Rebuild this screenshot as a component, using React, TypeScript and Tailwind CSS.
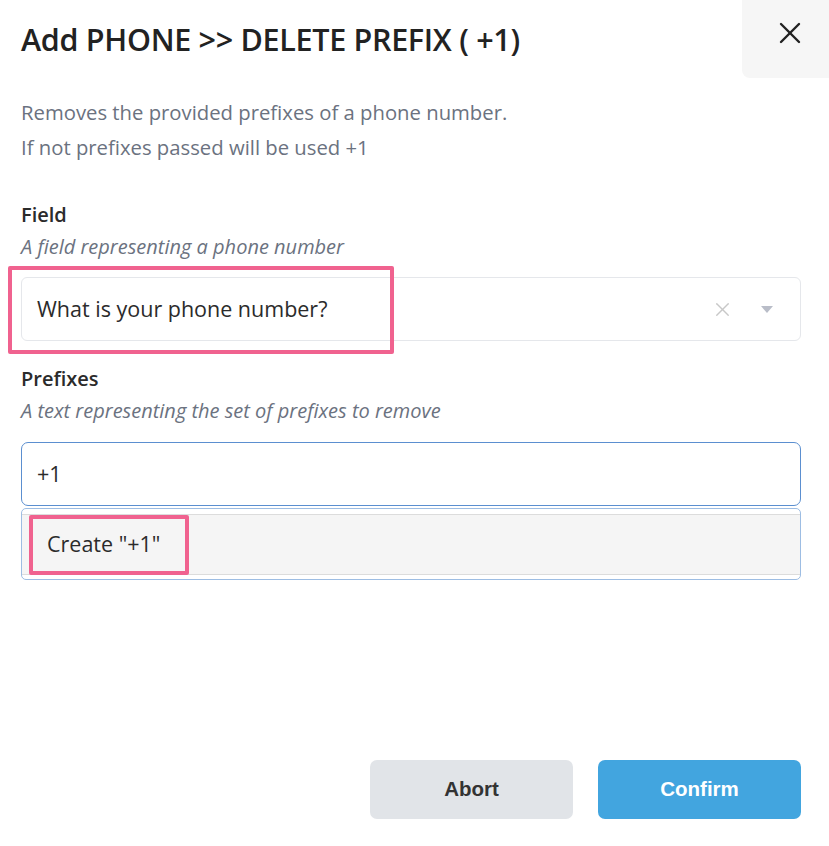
import { X } from "lucide-react";

const Label = ({ title, hint }: { title: string; hint: string }) => (
  <>
    <div className="text-[20px] leading-[30px] font-semibold text-[#2b2b2b]">{title}</div>
    <div className="mt-[4px] text-[20px] leading-[26px] italic text-[#6b7280]">{hint}</div>
  </>
);

const App = () => {
  return (
    <div className="w-[829px] h-[846px] bg-white font-['Open_Sans',sans-serif] text-[#222] overflow-hidden">
      {/* header */}
      <div className="flex justify-between items-start">
        <h1 className="pl-[21px] pt-[19px] text-[30.5px] leading-[40px] font-semibold text-[#222] tracking-[-0.3px]">
          Add PHONE &gt;&gt; DELETE PREFIX ( +1)
        </h1>
        <button className="w-[87px] h-[78px] bg-[#f6f6f6] rounded-bl-[8px] flex items-center justify-center pb-[12px] pl-[8px]">
          <X size={36} strokeWidth={1.6} className="text-[#222]" />
        </button>
      </div>

      <div className="pl-[21px] pr-[28px]">
        <div className="mt-[17px] text-[20.3px] leading-[35px] text-[#6b7280]">
          <p>Removes the provided prefixes of a phone number.</p>
          <p>If not prefixes passed will be used +1</p>
        </div>

        <div className="mt-[35px]">
          <Label title="Field" hint="A field representing a phone number" />
        </div>

        <div className="relative mt-[17px] h-[64px] border border-[#e5e7eb] rounded-[6px] flex items-center pl-[15px] pr-[27px]">
          <span className="text-[21.5px] text-[#2b2b2b] flex-1">What is your phone number?</span>
          <X size={23} strokeWidth={1.4} className="text-[#c8c8c8] mr-[27px]" />
          <svg width="12" height="7" viewBox="0 0 12 7">
            <path d="M0 0h12L6 7z" fill="#b9bdc8" />
          </svg>
          <div className="absolute left-[-14px] top-[-12px] w-[386px] h-[88px] border-[4px] border-[#f0628f] rounded-[2px] pointer-events-none" />
        </div>

        <div className="mt-[23px]">
          <Label title="Prefixes" hint="A text representing the set of prefixes to remove" />
        </div>

        <div className="mt-[18px] h-[64px] border-[1.5px] border-[#5b8fd0] rounded-[7px] flex items-center pl-[15px] text-[21.5px] text-[#2b2b2b]">
          +1
        </div>

        <div className="relative mt-[2px] h-[72px] border border-[#9dbde3] rounded-[5px] py-[5px]">
          <div className="h-[61px] bg-[#f5f5f5] border-y-[1.5px] border-[#dcdcdc] flex items-center pl-[25px] text-[21.5px] text-[#2b2b2b]">
            Create "+1"
          </div>
          <div className="absolute left-[7px] top-[6px] w-[160px] h-[60px] border-[4px] border-[#f0628f] rounded-[2px] pointer-events-none" />
        </div>

        <div className="mt-[180px] flex justify-end gap-[25px] font-['Liberation_Sans',Arial,sans-serif]">
          <button className="w-[203px] h-[59px] rounded-[7px] bg-[#e1e4e8] text-[20.5px] font-bold text-[#333]">
            Abort
          </button>
          <button className="w-[203px] h-[59px] rounded-[7px] bg-[#42a5df] text-[20.5px] font-bold text-white">
            Confirm
          </button>
        </div>
      </div>
    </div>
  );
};

export default App;
